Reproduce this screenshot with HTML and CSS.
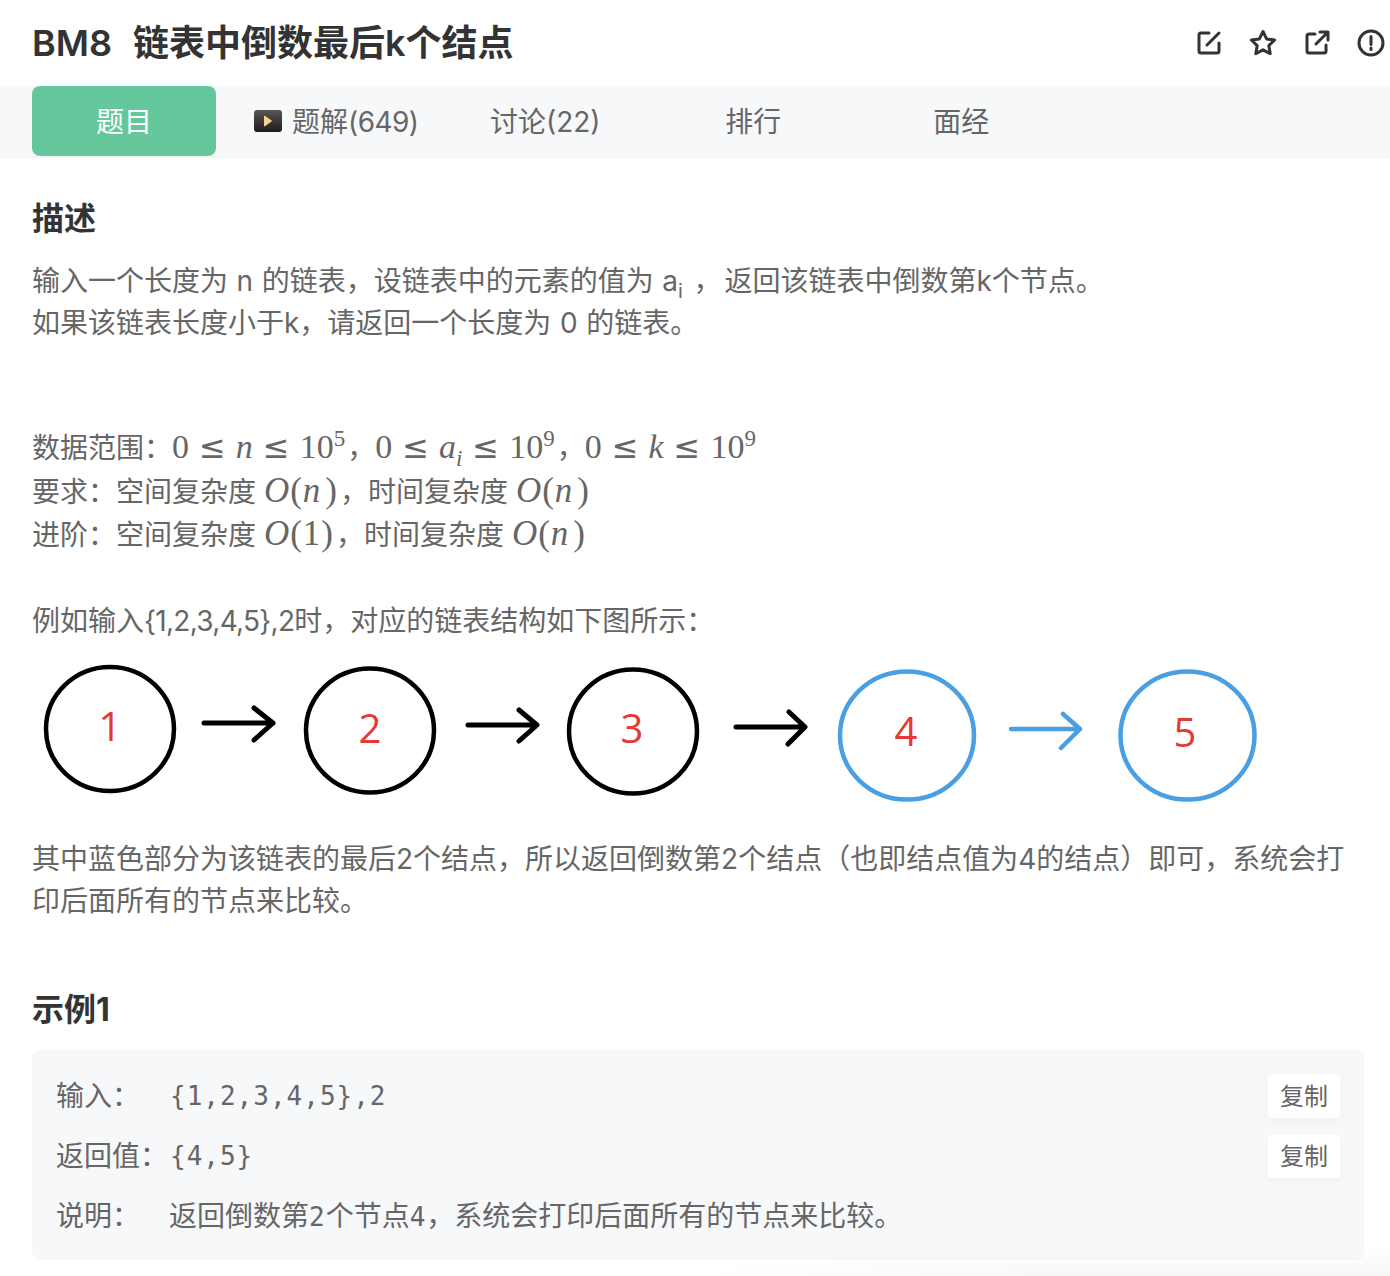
FILE: index.html
```html
<!DOCTYPE html>
<html lang="zh-CN">
<head>
<meta charset="utf-8">
<title>BM8 链表中倒数最后k个结点</title>
<link rel="stylesheet" href="styles.css">
</head>
<body>
<header class="head">
  <h1 class="title"><span class="num">BM8</span><span>链表中倒数最后k个结点</span></h1>
  <div class="tools">
    <svg class="ico" viewBox="0 0 28 28"><path d="M14 4H6a2 2 0 0 0-2 2v16a2 2 0 0 0 2 2h16a2 2 0 0 0 2-2v-8M12 16 24 4"/></svg>
    <svg class="ico" viewBox="0 0 28 28"><path d="M14 2.500l3.600 7.400 8 1.100-5.800 5.600 1.400 8-7.200-3.800-7.200 3.800 1.400-8-5.800-5.600 8-1.100z"/></svg>
    <svg class="ico" viewBox="0 0 28 28"><path d="M12 5H6a2 2 0 0 0-2 2v15a2 2 0 0 0 2 2h15a2 2 0 0 0 2-2v-6M13 15 25 3M17 3h8v8"/></svg>
    <svg class="ico" viewBox="0 0 28 28"><circle cx="14" cy="14" r="12"/><path d="M14 7.500v8M14 19v1.500"/></svg>
  </div>
</header>
<nav class="tabs">
  <a class="tab active">题目</a>
  <a class="tab video">
    <svg class="play" viewBox="0 0 28 22">
      <defs><linearGradient id="pg" x1="0" y1="0" x2="0" y2="1"><stop offset="0" stop-color="#5a5654"/><stop offset="1" stop-color="#1f1d1c"/></linearGradient></defs>
      <rect width="28" height="22" rx="3" fill="url(#pg)"/>
      <path d="M10.500 6 17.500 11l-7 5z" fill="#f6d58a" stroke="#f6d58a" stroke-linejoin="round"/>
    </svg>
    <span>题解<span class="count">(649)</span></span>
  </a>
  <a class="tab">讨论(22)</a>
  <a class="tab">排行</a>
  <a class="tab">面经</a>
</nav>
<main class="main">
  <h2 class="h2 first">描述</h2>
  <p class="p intro">输入一个长度为 n 的链表，设链表中的元素的值为 a<sub class="sub">i</sub> <span class="gap">，</span>返回该链表中倒数第k个节点。<br>如果该链表长度小于k，请返回一个长度为 0 的链表。</p>
  <div class="math-block">
    <div class="ml">数据范围：<span class="m">0<i class="r">≤</i><em>n</em><i class="r">≤</i>10<sup>5</sup></span>，<span class="m">0<i class="r">≤</i><em>a<sub>i</sub></em><i class="r">≤</i>10<sup>9</sup></span>，<span class="m">0<i class="r">≤</i><em>k</em><i class="r">≤</i>10<sup>9</sup></span></div>
    <div class="ml">要求：空间复杂度 <span class="m fn"><em>O</em>(<em class="v">n</em>)</span>，时间复杂度 <span class="m fn"><em>O</em>(<em class="v">n</em>)</span></div>
    <div class="ml">进阶：空间复杂度 <span class="m fn"><em>O</em>(1)</span>，时间复杂度 <span class="m fn"><em>O</em>(<em class="v">n</em>)</span></div>
  </div>
  <p class="p example">例如输入<span class="tight">{1,2,3,4,5},2</span>时，对应的链表结构如下图所示：</p>
  <svg class="chain" viewBox="0 0 1332 150">
    <g class="black">
      <ellipse cx="78" cy="69" rx="64" ry="62"/>
      <ellipse cx="338" cy="70.500" rx="64" ry="62"/>
      <ellipse cx="601" cy="71.500" rx="64" ry="62"/>
      <path class="arrow" d="M172 63h69M222 48l19 15-19 17M436 65h68M487 50l18 15-18 16M704 67h68M757 52l16 15-17 17"/>
    </g>
    <g class="blue">
      <ellipse cx="875" cy="75.500" rx="67" ry="64"/>
      <ellipse cx="1155.500" cy="75.500" rx="67" ry="64"/>
      <path d="M979 69h69M1031 54l17 15-19 19"/>
    </g>
    <g class="digits">
      <text x="78" y="81">1</text>
      <text x="338" y="83">2</text>
      <text x="600" y="83">3</text>
      <text x="874" y="86">4</text>
      <text x="1153" y="87">5</text>
    </g>
  </svg>
  <p class="p after">其中蓝色部分为该链表的最后2个结点，所以返回倒数第2个结点（也即结点值为4的结点）即可，系统会打印后面所有的节点来比较。</p>
  <h2 class="h2 sample-title">示例1</h2>
  <section class="sample">
    <div class="row"><span class="label">输入：</span><code class="code">{1,2,3,4,5},2</code><button class="copy">复制</button></div>
    <div class="row"><span class="label">返回值：</span><code class="code">{4,5}</code><button class="copy">复制</button></div>
    <div class="row"><span class="label">说明：</span><span class="code note">返回倒数第<span class="dg">2</span>个节点<span class="dg">4</span>，系统会打印后面所有的节点来比较。</span></div>
  </section>
</main>
<div class="fade"></div>
</body>
</html>
```
FILE: styles.css
```css
* { box-sizing: border-box; }
html, body { margin: 0; padding: 0; }
body {
  position: relative;
  width: 1390px;
  height: 1276px;
  overflow: hidden;
  background: #fff;
  color: #666;
  font-family: "Inter", "Noto Sans CJK SC", sans-serif;
  font-size: 28px;
}
.head {
  height: 86px;
  display: flex;
  align-items: center;
  justify-content: space-between;
  padding: 0 5px 0 32px;
}
.title {
  margin: 0;
  display: flex;
  gap: 21px;
  font-size: 36px;
  font-weight: 600;
  color: #333;
  line-height: 86px;
}
.tools { display: flex; gap: 26px; }
.ico {
  width: 28px;
  height: 28px;
  fill: none;
  stroke: #333;
  stroke-width: 3;
  stroke-linecap: round;
  stroke-linejoin: round;
}
.tabs {
  height: 72px;
  display: flex;
  gap: 24px;
  padding-left: 32px;
  background: #f7f8fa;
  border-bottom: 2px solid #f2f3f5;
  align-items: flex-start;
}
.tab {
  min-width: 184px;
  height: 70px;
  padding: 0 13px 3px;
  display: flex;
  align-items: center;
  justify-content: center;
  gap: 10px;
  border-radius: 8px;
  color: #666;
}
.tab.video { padding: 0 11px 3px 14px; }
.tab.active { background: #64c89c; color: #fff; }
.count { letter-spacing: -.6px; }
.play { width: 28px; height: 22px; margin-top: 3px; }
.main { padding: 0 26px 0 32px; }
.h2 {
  margin: 0;
  font-size: 32px;
  font-weight: 700;
  line-height: 44px;
  color: #333;
}
.first { margin-top: 39px; }
.p { margin: 0; line-height: 42px; }
.intro { margin-top: 19px; word-spacing: .7px; }
.sub { font-size: 20px; line-height: 0; margin-right: 2px; }
.gap { margin-right: 3px; }
.math-block { margin-top: 81px; }
.ml { height: 43.500px; line-height: 43.500px; white-space: nowrap; }
.m { font-family: "Liberation Serif", serif; font-size: 34px; margin-right: 2px; }
.m em { font-style: italic; }
.m i { font-style: normal; }
.r { margin: 0 10px; font-family: "DejaVu Sans", sans-serif; font-size: 32px; }
.fn { font-size: 35px; letter-spacing: 1px; }
.fn .v { letter-spacing: 5px; }
.m sup { font-size: 23px; line-height: 0; }
.m sub { font-size: 23px; line-height: 0; }
.example { margin-top: 44px; }
.tight { letter-spacing: -.7px; }
.chain { display: block; width: 1332px; height: 150px; margin-top: 18px; }
.chain ellipse, .chain path {
  fill: none;
  stroke-linecap: round;
  stroke-linejoin: round;
}
.black ellipse { stroke: #000; stroke-width: 4.500; }
.black .arrow { stroke: #000; stroke-width: 5; }
.blue ellipse, .blue path { stroke: #4a9fe3; stroke-width: 4.500; }
.digits text {
  fill: #e53935;
  font-family: "Open Sans", sans-serif;
  font-size: 40px;
  text-anchor: middle;
}
.after { margin-top: 28px; }
.sample-title { margin-top: 66px; }
.sample {
  margin-top: 18px;
  height: 210px;
  padding: 16px 24px;
  background: #f7f8fa;
  border-radius: 8px;
}
.row {
  height: 60px;
  display: flex;
  align-items: center;
}
.label { width: 114px; flex: none; white-space: nowrap; padding-bottom: 3px; }
.code {
  flex: 1;
  font-family: "DejaVu Sans Mono", "Noto Sans CJK SC", monospace;
  font-size: 26px;
  letter-spacing: 1px;
}
.note { font-size: 28px; letter-spacing: 0; padding-bottom: 3px; margin-left: -1px; }
.dg { font-size: 26px; letter-spacing: 1px; }
.copy {
  width: 72px;
  height: 44px;
  padding: 0 0 2px;
  border: 0;
  border-radius: 4px;
  background: #fff;
  box-shadow: 0 4px 12px rgba(0, 0, 0, .03);
  color: #666;
  font-family: inherit;
  font-size: 24px;
}
.fade {
  position: absolute;
  left: 700px;
  right: 0;
  bottom: 0;
  height: 26px;
  background: linear-gradient(to bottom, rgba(0, 0, 0, 0), rgba(0, 0, 0, .03));
  -webkit-mask-image: linear-gradient(to right, transparent, #000 50%);
  mask-image: linear-gradient(to right, transparent, #000 50%);
  pointer-events: none;
}
```
